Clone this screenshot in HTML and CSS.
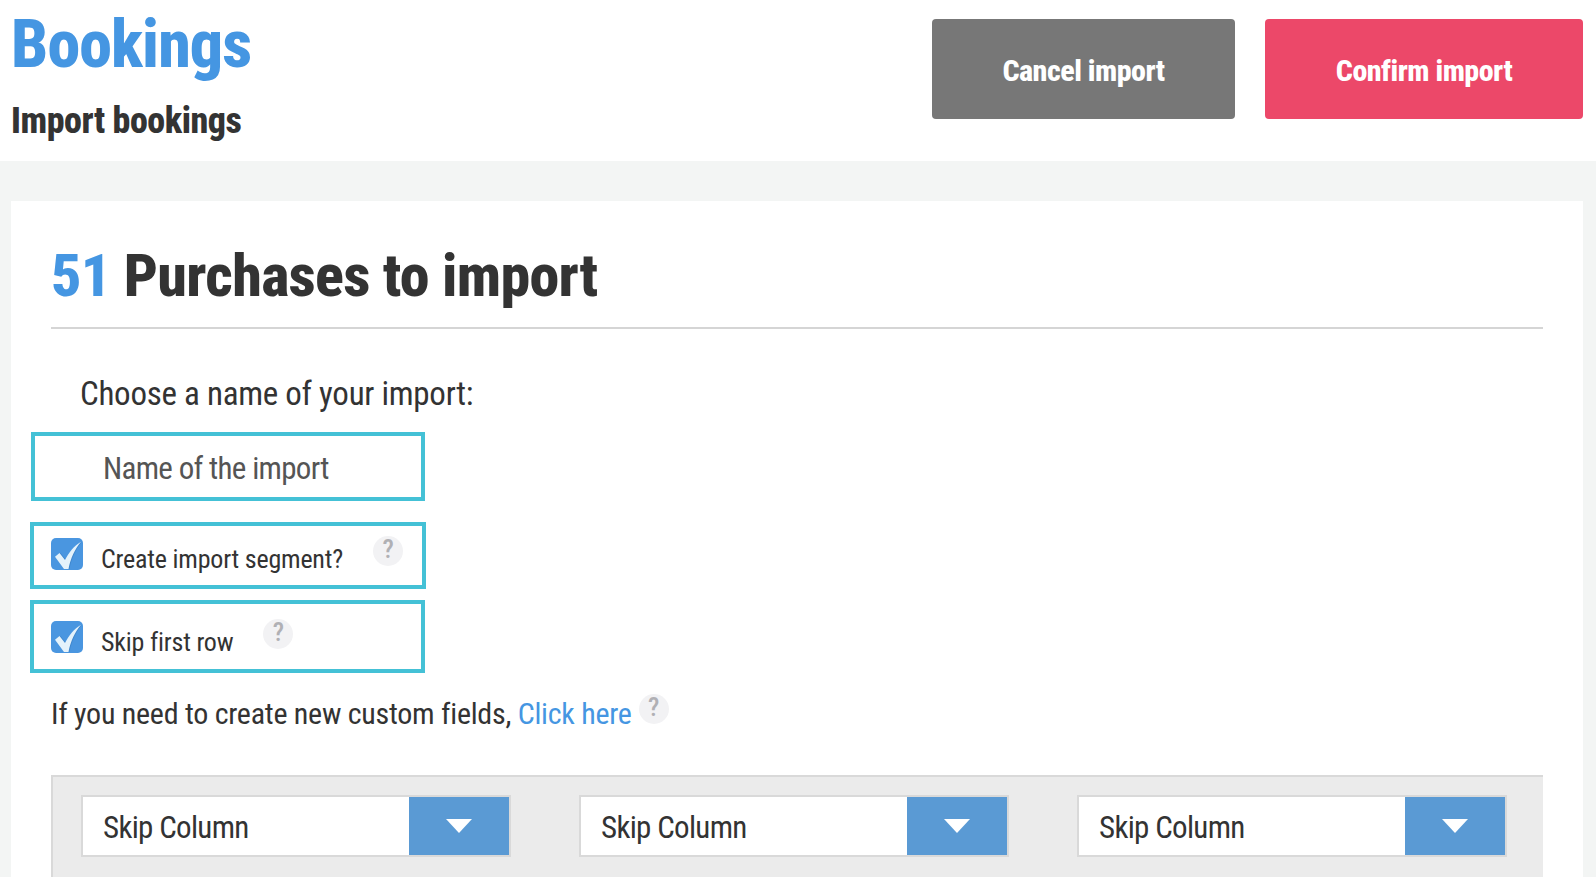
FILE: index.html
```html
<!DOCTYPE html>
<html lang="en">
<head>
    <meta charset="UTF-8">
    <title>Import bookings</title>
    <link rel="stylesheet" href="styles.css">
</head>
<body>

    <!--header-->
    <div class="header">
        <div class="titles">
            <h1>Bookings</h1>
            <h3>Import bookings</h3>
        </div>
        <div class="actions">
            <a class="btn cancel">Cancel import</a>
            <a class="btn confirm">Confirm import</a>
        </div>
    </div>

    <div class="card">
        <h2><span class="count">51</span> Purchases to import</h2>

        <p class="name-label">Choose a name of your import:</p>
        <div class="name-input">Name of the import</div>

        <div class="option first">
            <svg class="check" viewBox="0 0 32 32"><rect width="32" height="32" rx="5" fill="#4a96e0"/><path d="M5 18.700L9.500 15l5.500 7c4-8 9-14 16-18.300-6 7.300-10.500 16.300-12.500 27.300H14z" fill="#3f86cc"/><path d="M4 18.700L8.500 15l5.500 7c4-8 9-14 16-18.300-6 7.300-10.500 16.300-12.500 27.300H13z" fill="#e4f2fb"/></svg>
            <span class="option-text">Create import segment?</span>
            <span class="help">?</span>
        </div>
        <div class="option second">
            <svg class="check" viewBox="0 0 32 32"><rect width="32" height="32" rx="5" fill="#4a96e0"/><path d="M5 18.700L9.500 15l5.500 7c4-8 9-14 16-18.300-6 7.300-10.500 16.300-12.500 27.300H14z" fill="#3f86cc"/><path d="M4 18.700L8.500 15l5.500 7c4-8 9-14 16-18.300-6 7.300-10.500 16.300-12.500 27.300H13z" fill="#e4f2fb"/></svg>
            <span class="option-text">Skip first row</span>
            <span class="help">?</span>
        </div>

        <p class="custom">If you need to create new custom fields, <a>Click here</a><span class="help">?</span></p>

        <!--column mapping-->
        <div class="columns">
            <div class="select"><span>Skip Column</span><i class="arrow"></i></div>
            <div class="select"><span>Skip Column</span><i class="arrow"></i></div>
            <div class="select"><span>Skip Column</span><i class="arrow"></i></div>
        </div>
    </div>

</body>
</html>
```

FILE: styles.css
```css
html,body{height:877px;overflow:hidden;}
body{margin:0;background:#f3f5f4;color:#333;font-family:"Roboto","Liberation Sans",sans-serif;font-stretch:75%;font-weight:450;}
h1,h2,h3,p{margin:0;}

.header{
    display:flex;
    justify-content:space-between;
    height:161px;
    padding:0 13px 0 11px;
    background:#fff;
}
.header h1{
    margin-top:8px;
    font-size:66px;
    line-height:74px;
    font-weight:800;
    letter-spacing:-.9px;
    color:#4596e2;
}
.header h3{
    margin-top:17px;
    font-size:36px;
    line-height:44px;
    font-weight:800;
    letter-spacing:-.45px;
}
.actions{
    display:flex;
    gap:30px;
    padding-top:19px;
}
.btn{
    display:flex;
    align-items:center;
    justify-content:center;
    width:303px;
    height:98px;
    padding-top:2px;
    border-radius:4px;
    font-size:30px;
    font-weight:800;
    letter-spacing:-.5px;
    color:#fff;
}
.btn.cancel{background:#777;}
.btn.confirm{width:318px;background:#ec4869;}

.card{
    height:700px;
    margin:40px 13px 0 11px;
    padding:0 40px;
    background:#fff;
}
.card h2{
    padding:39px 0 16px;
    border-bottom:2px solid #d5d5d5;
    font-size:60px;
    line-height:71px;
    font-weight:800;
    letter-spacing:-.7px;
}
.count{color:#4596e2;}

.name-label{
    margin:45px 0 0 29px;
    font-size:33px;
    line-height:40px;
    letter-spacing:-.26px;
}
.name-input{
    width:318px;
    height:59px;
    margin:18px 0 0 -20px;
    padding:2px 0 0 68px;
    border:4px solid #44c1d6;
    font-size:31px;
    line-height:61px;
    letter-spacing:-.68px;
    color:#555;
}
.option{
    display:flex;
    align-items:flex-start;
    width:388px;
    margin-left:-21px;
    border:4px solid #44c1d6;
}
.option.first{height:59px;margin-top:21px;}
.option.second{height:65px;margin-top:11px;width:387px;}
.check{width:32px;height:32px;margin:12px 0 0 17px;flex:none;}
.option-text{
    margin:15px 0 0 18px;
    font-size:26px;
    line-height:36px;
    letter-spacing:-.2px;
}
.help{
    display:inline-block;
    width:30px;
    height:30px;
    border-radius:50%;
    background:#f2f2f4;
    color:#b0b0b4;
    font-size:26px;
    line-height:27px;
    font-weight:500;
    letter-spacing:0;
    text-align:center;
}
.option .help{margin:10px 0 0 30px;}
.option.second .help{margin-top:15px;}
.option.second .check{margin-top:17px;}
.option.second .option-text{margin-top:20px;}

.custom{
    margin-top:19px;
    font-size:30px;
    line-height:44px;
    letter-spacing:-.26px;
}
.custom a{color:#4596e2;}
.custom .help{margin-left:7px;vertical-align:8px;}

.columns{
    display:flex;
    gap:68px;
    height:100px;
    margin-top:39px;
    padding:18px 0 0 28px;
    border-top:2px solid #d9d9d9;
    border-left:2px solid #d9d9d9;
    background:#ebebeb;
}
.select{
    display:flex;
    justify-content:space-between;
    width:426px;
    height:58px;
    border:2px solid #d9d9d9;
    background:#fff;
    font-size:31px;
    line-height:62px;
    letter-spacing:-.68px;
}
.select span{padding-left:20px;}
.arrow{
    display:flex;
    align-items:center;
    justify-content:center;
    width:100px;
    background:#5a9ad4;
}
.arrow:after{
    content:"";
    width:0;
    height:0;
    border-left:13px solid transparent;
    border-right:13px solid transparent;
    border-top:14px solid #fff;
}
```
